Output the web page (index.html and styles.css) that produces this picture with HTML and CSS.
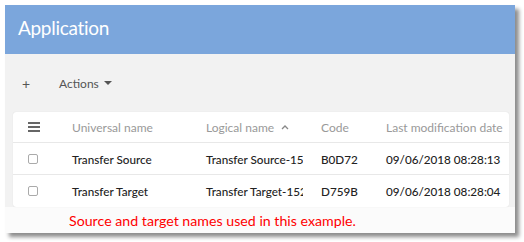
FILE: index.html
```html
<!DOCTYPE html>
<html lang="en">
<head>
  <meta charset="UTF-8" />
  <title>Application</title>
  <link rel="stylesheet" href="styles.css">
</head>
<body>

  <div class="window">

    <!-- App bar -->
    <div class="appbar">Application</div>

    <!-- Toolbar -->
    <div class="toolbar">
      <span class="add">+</span>
      <span class="actions">Actions <span class="caret"></span></span>
    </div>

    <!-- Grid -->
    <div class="content">
      <div class="card">
        <div class="row head">
          <div class="cell sel">
            <svg width="12" height="10" viewBox="0 0 12 10"><rect y="0" width="12" height="2" fill="#666"/><rect y="4" width="12" height="2" fill="#666"/><rect y="8" width="12" height="2" fill="#666"/></svg>
          </div>
          <div class="cell">Universal name</div>
          <div class="cell">Logical name
            <svg class="sort" width="8" height="6" viewBox="0 0 8 6"><path d="M1 5 L4 2 L7 5" fill="none" stroke="#888" stroke-width="1.3"/></svg>
          </div>
          <div class="cell">Code</div>
          <div class="cell">Last modification date</div>
        </div>
        <div class="row">
          <div class="cell sel"><span class="check"></span></div>
          <div class="cell">Transfer Source</div>
          <div class="cell">Transfer Source-1528533293</div>
          <div class="cell">B0D72</div>
          <div class="cell">09/06/2018 08:28:13</div>
        </div>
        <div class="row">
          <div class="cell sel"><span class="check"></span></div>
          <div class="cell">Transfer Target</div>
          <div class="cell">Transfer Target-1528533284</div>
          <div class="cell">D759B</div>
          <div class="cell">09/06/2018 08:28:04</div>
        </div>
      </div>
    </div>

    <div class="note">Source and target names used in this example.</div>

  </div>

</body>
</html>
```

FILE: styles.css
```css
* { box-sizing: border-box; margin: 0; padding: 0; }
body { font-family: Lato, 'Noto Sans', sans-serif; background: #fff; width: 524px; height: 242px; overflow: hidden; }
.window { margin: 5px 0 0 5px; width: 510px; height: 228px; background: #fbfbfb; box-shadow: 4px 4px 4px rgba(0,0,0,0.45); display: flex; flex-direction: column; }
.appbar { height: 49px; background: #7ba6dc; color: #fff; font-size: 19px; letter-spacing: -0.3px; padding: 0 0 4px 13px; display: flex; align-items: center; }
.toolbar { height: 58px; background: #f2f2f2; display: flex; align-items: center; padding: 0 0 0 17px; font-size: 12px; color: #555; }
.add { font-size: 14px; width: 37px; }
.actions { display: flex; align-items: center; gap: 5px; }
.caret { width: 0; height: 0; border-left: 4px solid transparent; border-right: 4px solid transparent; border-top: 4px solid #555; }
.content { background: #f2f2f2; padding: 0 6px 0 8px; }
.card { background: #fff; border-radius: 3px; box-shadow: 0 0 1px rgba(0,0,0,0.15); }
.row { display: grid; grid-template-columns: 41px 134px 115px 66px 1fr; height: 32px; border-bottom: 1px solid #e8e8e8; font-size: 11.7px; color: #222; font-weight: 500; }
.row:last-child { border-bottom: none; }
.row.head { height: 31px; font-size: 12px; color: #999; font-weight: 400; }
.cell { display: flex; align-items: center; padding: 0 2px 0 18px; white-space: nowrap; overflow: hidden; }
.cell:last-child { padding-left: 17px; }
.cell.sel { padding-left: 15px; }
.sort { margin-left: 7px; }
.check { width: 10px; height: 10px; border: 1px solid #aaa; border-radius: 2px; }
.note { flex: 1; color: #f00; font-size: 14.2px; padding: 5px 0 0 64px; }
```
